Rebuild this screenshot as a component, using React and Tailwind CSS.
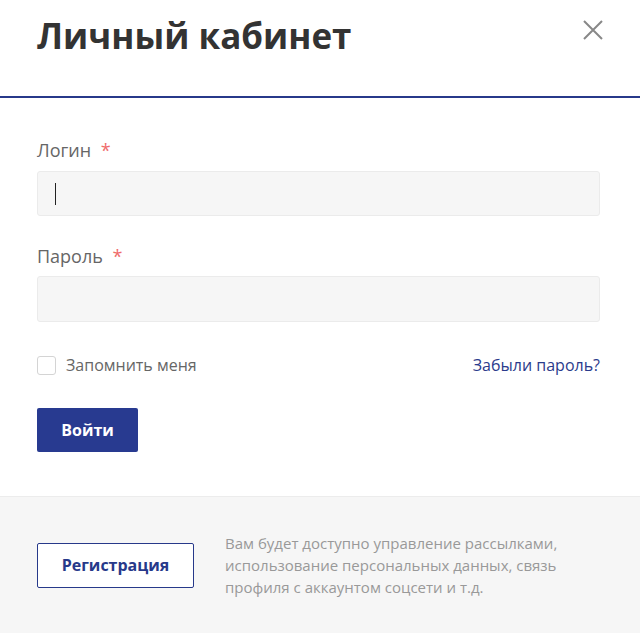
import React from "react";

export default function App() {
    return (
        <div className="w-[640px] h-[633px] bg-white flex flex-col overflow-hidden" style={{ fontFamily: '"Open Sans", "Noto Sans", sans-serif' }}>
            <div className="h-[98px] border-b-2 border-[#27398a] flex items-start justify-between pl-[37px] pr-[37px] pt-[13px]">
                <h1 className="text-[35px] font-bold text-[#333] leading-[46px]">Личный кабинет</h1>
                <button className="mt-[7px] text-[#888]">
                    <svg width="20" height="20" viewBox="0 0 20 20" fill="none" stroke="currentColor" strokeWidth="2">
                        <path d="M1 1 L19 19 M19 1 L1 19" />
                    </svg>
                </button>
            </div>

            <div className="flex-1 pl-[37px] pr-[40px] pt-[40px] flex flex-col">
                <label className="text-[18px] text-[#666] leading-[24px] mb-[9px]">
                    Логин <span className="text-[#ef6b6b] ml-[5px]">*</span>
                </label>
                <div className="h-[45px] bg-[#f6f6f6] border border-[#ebebeb] rounded-[3px] flex items-center pl-[17px]">
                    <span className="w-px h-[22px] bg-[#222]"></span>
                </div>

                <label className="text-[18px] text-[#666] leading-[24px] mt-[28px] mb-[8px]">
                    Пароль <span className="text-[#ef6b6b] ml-[5px]">*</span>
                </label>
                <div className="h-[46px] bg-[#f6f6f6] border border-[#ebebeb] rounded-[3px]"></div>

                <div className="flex items-center justify-between mt-[32px] h-[22px]">
                    <label className="flex items-center gap-[10px] text-[16px] text-[#666]">
                        <span className="w-[19px] h-[19px] border border-[#d4d4d4] rounded-[3px] bg-white"></span>
                        Запомнить меня
                    </label>
                    <a className="text-[16px] text-[#2b3b8c]">Забыли пароль?</a>
                </div>

                <button className="mt-[32px] w-[101px] h-[44px] bg-[#283a90] rounded-[2px] text-white font-bold text-[16px]">Войти</button>
            </div>

            <div className="h-[137px] bg-[#f6f6f6] border-t border-[#ececec] flex items-center px-[37px] gap-[31px]">
                <button className="w-[157px] h-[45px] border border-[#27398a] rounded-[2px] bg-white text-[#27398a] font-bold text-[16px] shrink-0">Регистрация</button>
                <p className="text-[15px] leading-[22px] text-[#999] w-[340px]">
                    Вам будет доступно управление рассылками, использование персональных данных, связь профиля с аккаунтом соцсети и т.д.
                </p>
            </div>
        </div>
    );
}
